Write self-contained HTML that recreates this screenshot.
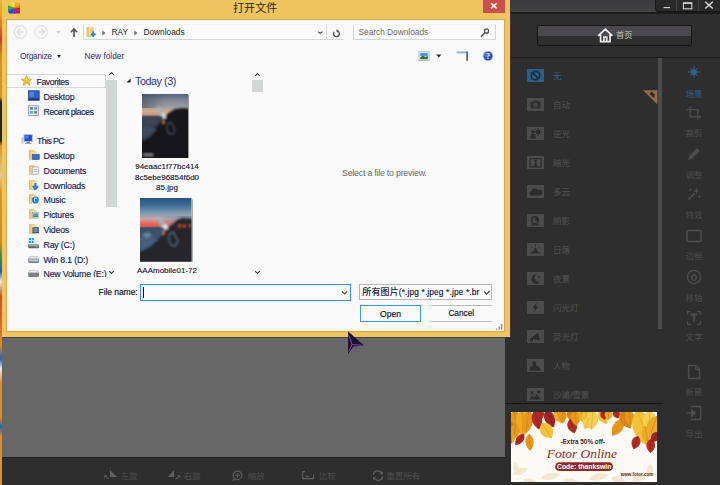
<!DOCTYPE html>
<html lang="zh">
<head>
<meta charset="utf-8">
<title>打开文件</title>
<style>
html,body{margin:0;padding:0;}
body{width:720px;height:485px;position:relative;overflow:hidden;background:#2e2e2e;
 font-family:"Liberation Sans","Noto Sans CJK SC",sans-serif;font-size:8.5px;color:#1b1b3a;}
.a{position:absolute;}
.t{position:absolute;white-space:nowrap;line-height:12px;height:12px;}
/* ---------- background app ---------- */
#canvas{left:2px;top:0;width:503px;height:457px;background:#676767;}
#strip{left:0;top:0;width:2px;height:485px;background:linear-gradient(#e6b436 0,#e8a428 3%,#c8402a 8%,#e0901e 12%,#e0901e 20%,#2a2420 21%,#2a2420 29%,#e0901e 30%,#e8c890 36%,#e0901e 40%,#d88a20 50%,#3a8a4a 53%,#2a60b0 56%,#e8e8e8 58%,#c8502a 61%,#d8702a 68%,#e0901e 71%,#2a60b0 74%,#e8e8e8 76%,#e0901e 79%,#e0901e 86%,#2a60b0 88%,#e0901e 90%,#e0901e 100%);}
#botbar{left:2px;top:457px;width:503px;height:28px;background:#2e2e2e;border-top:1px solid #1c1c1c;box-sizing:border-box;}
#rpanel{left:505px;top:0;width:215px;height:485px;background:#2e2e2e;}
#apptitle{left:505px;top:0;width:215px;height:14.2px;background:linear-gradient(#3b3a3c,#424144);border-bottom:2px solid #1c1c1c;box-sizing:border-box;}
#winctl{left:655px;top:0;width:65px;height:12px;background:#2a2a2a;border-left:1px solid #151515;border-bottom:1px solid #151515;border-bottom-left-radius:4px;box-sizing:border-box;}
#homebtn{left:537px;top:25px;width:155px;height:21px;box-sizing:border-box;border:1px solid #171717;border-radius:2px;background:linear-gradient(#4b494d 0,#4b494d 52%,#2f2f2f 52%,#2d2d2d 100%);}
.bt{color:#4d4d4d;font-size:8.5px;}
.sc{color:#545454;font-size:8.5px;}
.ric{color:#4d4d4d;font-size:8.5px;text-align:center;width:40px;}
.sico{position:absolute;left:527px;width:17px;height:13px;background:#484848;}
/* ---------- dialog ---------- */
#dlg{left:2px;top:0;width:508px;height:336.7px;background:#efc55f;box-shadow:0.8px 0.8px 0 0 #3e3c44;}
#dlgin{left:7px;top:19.5px;width:497px;height:311px;background:#fafafa;box-shadow:0 0 0 0.9px #cfa752;}
.nav{color:#151a58;-webkit-text-stroke:0.15px #151a58;font-size:8.8px;letter-spacing:-0.2px;}
.fn{color:#0c0c2c;-webkit-text-stroke:0.1px #0c0c2c;font-size:8px;text-align:center;width:70px;line-height:10.5px;height:auto;white-space:normal;}
</style>
</head>
<body>
<!-- background application -->
<div class="a" id="strip"></div>
<div class="a" id="canvas"></div>
<div class="a" id="botbar"></div>
<div class="a" id="rpanel"></div>
<div class="a" id="apptitle"></div>
<div class="a" id="winctl">
 <svg class="a" style="left:0;top:0" width="65" height="12" viewBox="0 0 65 12">
  <line x1="20.5" y1="0" x2="20.5" y2="11" stroke="#444" stroke-width="1"/>
  <line x1="42.5" y1="0" x2="42.5" y2="11" stroke="#444" stroke-width="1"/>
  <line x1="7.5" y1="7.6" x2="14" y2="7.6" stroke="#cfcfcf" stroke-width="1.2"/>
  <rect x="27.4" y="3.2" width="8.4" height="5.6" fill="none" stroke="#cfcfcf" stroke-width="1.1"/><line x1="27" y1="3" x2="36.2" y2="3" stroke="#cfcfcf" stroke-width="1.6"/>
  <path d="M49.2 1.8 L56.8 8.6 M56.8 1.8 L49.2 8.6" stroke="#dcdcdc" stroke-width="1.4" fill="none"/>
 </svg>
</div>
<div class="a" id="homebtn"></div>
<svg class="a" style="left:597px;top:28px" width="17" height="15" viewBox="0 0 17 15">
 <path d="M1.2 7.8 L8.3 1.2 L15.4 7.8 M3.6 6.6 V13.6 H13 V6.6 M6.9 13.6 V9 H9.7 V13.6" fill="none" stroke="#efefef" stroke-width="1.7" stroke-linejoin="miter"/>
</svg>
<div class="t" style="left:616px;top:30.2px;color:#c6c6c6;font-size:8.2px;">首页</div>
<div class="a" style="left:505px;top:57px;width:215px;height:1px;background:#191919;"></div>
<div class="a" style="left:658px;top:58px;width:4px;height:271px;background:#4c4c4e;"></div>
<div class="a" style="left:505px;top:403px;width:158px;height:1px;background:#161616;"></div>

<!-- ad banner -->
<svg class="a" style="left:510.6px;top:411.7px" width="146.6" height="70.8" viewBox="0 0 146.6 70.8">
 <rect width="146.6" height="70.8" fill="#fdfaf5"/>
 <path d="M0 0 C 4.00 -4.88 11.20 -4.03 16.00 0 C 11.20 4.03 4.00 4.88 0 0 Z" transform="translate(2.0 62.0) rotate(-20)" fill="#f3e2c6" opacity="0.8"/>
 <path d="M0 0 C 3.00 -3.90 8.40 -3.22 12.00 0 C 8.40 3.22 3.00 3.90 0 0 Z" transform="translate(4.0 50.0) rotate(80)" fill="#f3e2c6" opacity="0.8"/>
 <path d="M0 0 C 5.00 -4.88 14.00 -4.03 20.00 0 C 14.00 4.03 5.00 4.88 0 0 Z" transform="translate(30.0 66.0) rotate(-10)" fill="#f3e2c6" opacity="0.8"/>
 <path d="M0 0 C 4.00 -3.90 11.20 -3.22 16.00 0 C 11.20 3.22 4.00 3.90 0 0 Z" transform="translate(52.0 68.0) rotate(8)" fill="#f3e2c6" opacity="0.8"/>
 <path d="M0 0 C 5.00 -4.88 14.00 -4.03 20.00 0 C 14.00 4.03 5.00 4.88 0 0 Z" transform="translate(78.0 67.0) rotate(-12)" fill="#f3e2c6" opacity="0.8"/>
 <path d="M0 0 C 4.00 -4.88 11.20 -4.03 16.00 0 C 11.20 4.03 4.00 4.88 0 0 Z" transform="translate(100.0 66.0) rotate(15)" fill="#f3e2c6" opacity="0.8"/>
 <path d="M0 0 C 4.50 -4.88 12.60 -4.03 18.00 0 C 12.60 4.03 4.50 4.88 0 0 Z" transform="translate(120.0 68.0) rotate(-15)" fill="#f3e2c6" opacity="0.8"/>
 <path d="M0 0 C 3.50 -4.88 9.80 -4.03 14.00 0 C 9.80 4.03 3.50 4.88 0 0 Z" transform="translate(140.0 52.0) rotate(100)" fill="#f3e2c6" opacity="0.8"/>
 <path d="M0 0 C 3.50 -3.90 9.80 -3.22 14.00 0 C 9.80 3.22 3.50 3.90 0 0 Z" transform="translate(12.0 68.0) rotate(10)" fill="#f3e2c6" opacity="0.8"/>
 <path d="M0 0 C 5.00 -8.14 14.00 -6.73 20.00 0 C 14.00 6.73 5.00 8.14 0 0 Z" transform="translate(0.0 2.0) rotate(60)" fill="#efaa26"/><path d="M0 0 H18.4" transform="translate(0.0 2.0) rotate(60)" stroke="#c87410" stroke-width="0.5" fill="none"/>
 <path d="M0 0 C 6.00 -9.30 16.80 -7.69 24.00 0 C 16.80 7.69 6.00 9.30 0 0 Z" transform="translate(3.0 -2.0) rotate(82)" fill="#e8981a"/><path d="M0 0 H22.1" transform="translate(3.0 -2.0) rotate(82)" stroke="#c87410" stroke-width="0.5" fill="none"/>
 <path d="M0 0 C 6.75 -9.88 18.90 -8.17 27.00 0 C 18.90 8.17 6.75 9.88 0 0 Z" transform="translate(11.0 -2.0) rotate(88)" fill="#efaa26"/><path d="M0 0 H24.8" transform="translate(11.0 -2.0) rotate(88)" stroke="#c87410" stroke-width="0.5" fill="none"/>
 <path d="M0 0 C 6.00 -8.14 16.80 -6.73 24.00 0 C 16.80 6.73 6.00 8.14 0 0 Z" transform="translate(18.0 -2.0) rotate(98)" fill="#e8981a"/><path d="M0 0 H22.1" transform="translate(18.0 -2.0) rotate(98)" stroke="#c87410" stroke-width="0.5" fill="none"/>
 <path d="M0 0 C 3.50 -5.81 9.80 -4.80 14.00 0 C 9.80 4.80 3.50 5.81 0 0 Z" transform="translate(0.0 10.0) rotate(75)" fill="#dc8416"/><path d="M0 0 H12.9" transform="translate(0.0 10.0) rotate(75)" stroke="#c87410" stroke-width="0.5" fill="none"/>
 <path d="M0 0 C 4.00 -6.98 11.20 -5.77 16.00 0 C 11.20 5.77 4.00 6.98 0 0 Z" transform="translate(5.0 12.0) rotate(100)" fill="#e8981a"/><path d="M0 0 H14.7" transform="translate(5.0 12.0) rotate(100)" stroke="#c87410" stroke-width="0.5" fill="none"/>
 <path d="M0 0 C 3.50 -5.35 9.80 -4.42 14.00 0 C 9.80 4.42 3.50 5.35 0 0 Z" transform="translate(13.0 22.0) rotate(128)" fill="#b32c24"/><path d="M0 0 H12.9" transform="translate(13.0 22.0) rotate(128)" stroke="#7e1c18" stroke-width="0.5" fill="none"/>
 <path d="M0 0 C 4.25 -6.04 11.90 -5.00 17.00 0 C 11.90 5.00 4.25 6.04 0 0 Z" transform="translate(18.0 22.0) rotate(86)" fill="#e8981a"/><path d="M0 0 H15.6" transform="translate(18.0 22.0) rotate(86)" stroke="#c87410" stroke-width="0.5" fill="none"/>
 <path d="M0 0 C 2.50 -4.65 7.00 -3.84 10.00 0 C 7.00 3.84 2.50 4.65 0 0 Z" transform="translate(1.0 22.0) rotate(95)" fill="#efaa26"/><path d="M0 0 H9.2" transform="translate(1.0 22.0) rotate(95)" stroke="#c87410" stroke-width="0.5" fill="none"/>
 <path d="M0 0 C 5.00 -7.56 14.00 -6.25 20.00 0 C 14.00 6.25 5.00 7.56 0 0 Z" transform="translate(24.0 -2.0) rotate(78)" fill="#b32c24"/><path d="M0 0 H18.4" transform="translate(24.0 -2.0) rotate(78)" stroke="#7e1c18" stroke-width="0.5" fill="none"/>
 <path d="M0 0 C 4.75 -7.56 13.30 -6.25 19.00 0 C 13.30 6.25 4.75 7.56 0 0 Z" transform="translate(35.0 -2.0) rotate(66)" fill="#a02420"/><path d="M0 0 H17.5" transform="translate(35.0 -2.0) rotate(66)" stroke="#7e1c18" stroke-width="0.5" fill="none"/>
 <path d="M0 0 C 3.00 -5.81 8.40 -4.80 12.00 0 C 8.40 4.80 3.00 5.81 0 0 Z" transform="translate(30.0 -3.0) rotate(100)" fill="#b32c24"/><path d="M0 0 H11.0" transform="translate(30.0 -3.0) rotate(100)" stroke="#7e1c18" stroke-width="0.5" fill="none"/>
 <path d="M0 0 C 4.50 -9.30 12.60 -7.69 18.00 0 C 12.60 7.69 4.50 9.30 0 0 Z" transform="translate(31.0 11.0) rotate(58)" fill="#f3c238"/><path d="M0 0 H16.6" transform="translate(31.0 11.0) rotate(58)" stroke="#d8a020" stroke-width="0.5" fill="none"/>
 <path d="M0 0 C 4.00 -7.56 11.20 -6.25 16.00 0 C 11.20 6.25 4.00 7.56 0 0 Z" transform="translate(44.0 -2.0) rotate(55)" fill="#efaa26"/><path d="M0 0 H14.7" transform="translate(44.0 -2.0) rotate(55)" stroke="#c87410" stroke-width="0.5" fill="none"/>
 <path d="M0 0 C 3.25 -6.39 9.10 -5.29 13.00 0 C 9.10 5.29 3.25 6.39 0 0 Z" transform="translate(52.0 -2.0) rotate(95)" fill="#e8981a"/><path d="M0 0 H12.0" transform="translate(52.0 -2.0) rotate(95)" stroke="#c87410" stroke-width="0.5" fill="none"/>
 <path d="M0 0 C 3.00 -5.81 8.40 -4.80 12.00 0 C 8.40 4.80 3.00 5.81 0 0 Z" transform="translate(58.0 -2.0) rotate(70)" fill="#dc8416"/><path d="M0 0 H11.0" transform="translate(58.0 -2.0) rotate(70)" stroke="#c87410" stroke-width="0.5" fill="none"/>
 <path d="M0 0 C 3.75 -6.98 10.50 -5.77 15.00 0 C 10.50 5.77 3.75 6.98 0 0 Z" transform="translate(59.0 7.0) rotate(72)" fill="#b32c24"/><path d="M0 0 H13.8" transform="translate(59.0 7.0) rotate(72)" stroke="#7e1c18" stroke-width="0.5" fill="none"/>
 <path d="M0 0 C 4.00 -6.98 11.20 -5.77 16.00 0 C 11.20 5.77 4.00 6.98 0 0 Z" transform="translate(64.0 -2.0) rotate(85)" fill="#e8981a"/><path d="M0 0 H14.7" transform="translate(64.0 -2.0) rotate(85)" stroke="#c87410" stroke-width="0.5" fill="none"/>
 <path d="M0 0 C 3.50 -6.98 9.80 -5.77 14.00 0 C 9.80 5.77 3.50 6.98 0 0 Z" transform="translate(70.0 -2.0) rotate(70)" fill="#efaa26"/><path d="M0 0 H12.9" transform="translate(70.0 -2.0) rotate(70)" stroke="#c87410" stroke-width="0.5" fill="none"/>
 <path d="M0 0 C 4.75 -8.14 13.30 -6.73 19.00 0 C 13.30 6.73 4.75 8.14 0 0 Z" transform="translate(74.0 -2.0) rotate(75)" fill="#f3c238"/><path d="M0 0 H17.5" transform="translate(74.0 -2.0) rotate(75)" stroke="#d8a020" stroke-width="0.5" fill="none"/>
 <path d="M0 0 C 5.00 -8.72 14.00 -7.21 20.00 0 C 14.00 7.21 5.00 8.72 0 0 Z" transform="translate(82.0 -2.0) rotate(95)" fill="#f6d052"/><path d="M0 0 H18.4" transform="translate(82.0 -2.0) rotate(95)" stroke="#d8a020" stroke-width="0.5" fill="none"/>
 <path d="M0 0 C 4.00 -6.98 11.20 -5.77 16.00 0 C 11.20 5.77 4.00 6.98 0 0 Z" transform="translate(88.0 -2.0) rotate(60)" fill="#f3c238"/><path d="M0 0 H14.7" transform="translate(88.0 -2.0) rotate(60)" stroke="#d8a020" stroke-width="0.5" fill="none"/>
 <path d="M0 0 C 3.00 -5.81 8.40 -4.80 12.00 0 C 8.40 4.80 3.00 5.81 0 0 Z" transform="translate(78.0 6.0) rotate(110)" fill="#f6d052"/><path d="M0 0 H11.0" transform="translate(78.0 6.0) rotate(110)" stroke="#d8a020" stroke-width="0.5" fill="none"/>
 <path d="M0 0 C 2.50 -5.23 7.00 -4.32 10.00 0 C 7.00 4.32 2.50 5.23 0 0 Z" transform="translate(92.0 -2.0) rotate(80)" fill="#b32c24"/><path d="M0 0 H9.2" transform="translate(92.0 -2.0) rotate(80)" stroke="#7e1c18" stroke-width="0.5" fill="none"/>
 <path d="M0 0 C 2.25 -5.23 6.30 -4.32 9.00 0 C 6.30 4.32 2.25 5.23 0 0 Z" transform="translate(104.0 -2.0) rotate(70)" fill="#b32c24"/><path d="M0 0 H8.3" transform="translate(104.0 -2.0) rotate(70)" stroke="#7e1c18" stroke-width="0.5" fill="none"/>
 <path d="M0 0 C 2.50 -5.81 7.00 -4.80 10.00 0 C 7.00 4.80 2.50 5.81 0 0 Z" transform="translate(98.0 -2.0) rotate(95)" fill="#efaa26"/><path d="M0 0 H9.2" transform="translate(98.0 -2.0) rotate(95)" stroke="#c87410" stroke-width="0.5" fill="none"/>
 <path d="M0 0 C 5.00 -7.56 14.00 -6.25 20.00 0 C 14.00 6.25 5.00 7.56 0 0 Z" transform="translate(112.0 7.0) rotate(122)" fill="#e8981a"/><path d="M0 0 H18.4" transform="translate(112.0 7.0) rotate(122)" stroke="#c87410" stroke-width="0.5" fill="none"/>
 <path d="M0 0 C 5.00 -8.14 14.00 -6.73 20.00 0 C 14.00 6.73 5.00 8.14 0 0 Z" transform="translate(110.0 -1.0) rotate(62)" fill="#dc8416"/><path d="M0 0 H18.4" transform="translate(110.0 -1.0) rotate(62)" stroke="#c87410" stroke-width="0.5" fill="none"/>
 <path d="M0 0 C 4.00 -6.98 11.20 -5.77 16.00 0 C 11.20 5.77 4.00 6.98 0 0 Z" transform="translate(118.0 -2.0) rotate(85)" fill="#e8981a"/><path d="M0 0 H14.7" transform="translate(118.0 -2.0) rotate(85)" stroke="#c87410" stroke-width="0.5" fill="none"/>
 <path d="M0 0 C 6.00 -4.19 16.80 -3.46 24.00 0 C 16.80 3.46 6.00 4.19 0 0 Z" transform="translate(126.0 3.0) rotate(72)" fill="#b32c24"/><path d="M0 0 H22.1" transform="translate(126.0 3.0) rotate(72)" stroke="#7e1c18" stroke-width="0.5" fill="none"/>
 <path d="M0 0 C 10.00 -15.11 28.00 -12.49 40.00 0 C 28.00 12.49 10.00 15.11 0 0 Z" transform="translate(126.0 -2.0) rotate(70)" fill="#f3c238"/><path d="M0 0 H36.8" transform="translate(126.0 -2.0) rotate(70)" stroke="#d8a020" stroke-width="0.5" fill="none"/>
 <path d="M0 0 C 6.50 -10.46 18.20 -8.65 26.00 0 C 18.20 8.65 6.50 10.46 0 0 Z" transform="translate(138.0 -2.0) rotate(85)" fill="#f6d052"/><path d="M0 0 H23.9" transform="translate(138.0 -2.0) rotate(85)" stroke="#d8a020" stroke-width="0.5" fill="none"/>
 <path d="M0 0 C 5.50 -9.30 15.40 -7.69 22.00 0 C 15.40 7.69 5.50 9.30 0 0 Z" transform="translate(146.0 4.0) rotate(110)" fill="#efaa26"/><path d="M0 0 H20.2" transform="translate(146.0 4.0) rotate(110)" stroke="#c87410" stroke-width="0.5" fill="none"/>
 <path d="M0 0 C 5.00 -6.98 14.00 -5.77 20.00 0 C 14.00 5.77 5.00 6.98 0 0 Z" transform="translate(134.0 14.0) rotate(80)" fill="#efaa26"/><path d="M0 0 H18.4" transform="translate(134.0 14.0) rotate(80)" stroke="#c87410" stroke-width="0.5" fill="none"/>
 <path d="M0 0 C 3.50 -6.39 9.80 -5.29 14.00 0 C 9.80 5.29 3.50 6.39 0 0 Z" transform="translate(127.0 24.0) rotate(108)" fill="#b32c24"/><path d="M0 0 H12.9" transform="translate(127.0 24.0) rotate(108)" stroke="#7e1c18" stroke-width="0.5" fill="none"/>
 <path d="M0 0 C 3.50 -6.39 9.80 -5.29 14.00 0 C 9.80 5.29 3.50 6.39 0 0 Z" transform="translate(140.0 27.0) rotate(92)" fill="#b32c24"/><path d="M0 0 H12.9" transform="translate(140.0 27.0) rotate(92)" stroke="#7e1c18" stroke-width="0.5" fill="none"/>
 <path d="M0 0 C 3.00 -5.81 8.40 -4.80 12.00 0 C 8.40 4.80 3.00 5.81 0 0 Z" transform="translate(147.0 20.0) rotate(120)" fill="#a02420"/><path d="M0 0 H11.0" transform="translate(147.0 20.0) rotate(120)" stroke="#7e1c18" stroke-width="0.5" fill="none"/>
 <text x="71.8" y="32.3" text-anchor="middle" font-family="Liberation Sans,sans-serif" font-weight="bold" font-size="6.4" fill="#3b2a28">-Extra 50% off-</text>
 <text x="70.9" y="46.2" text-anchor="middle" font-family="Liberation Serif,serif" font-style="italic" font-size="13.4" fill="#8c2a22">Fotor Online</text>
 <rect x="44.2" y="50.3" width="57.8" height="8.7" rx="4.3" fill="#8f2a22"/>
 <text x="73.2" y="57.1" text-anchor="middle" font-family="Liberation Sans,sans-serif" font-weight="bold" font-size="6.8" fill="#fff">Code: thankswin</text>
 <text x="126" y="64.4" text-anchor="middle" font-family="Liberation Sans,sans-serif" font-weight="bold" font-size="4.6" fill="#5a2a24">www.fotor.com</text>
</svg>
<!-- /ad banner -->
<!-- DIALOG -->
<div class="a" id="dlg"></div>
<div class="a" id="dlgin"></div>

<!-- title bar -->
<svg class="a" style="left:7.9px;top:3px" width="12.2" height="10.8" viewBox="0 0 12.2 10.8">
 <defs><clipPath id="ic"><path d="M0.6 0 H11.6 Q12.2 0 12.2 0.6 V9 Q12.2 10.8 10.2 10.8 H2 Q0 10.8 0 9 V0.6 Q0 0 0.6 0 Z"/></clipPath></defs>
 <g clip-path="url(#ic)">
  <polygon points="6,4.7 0,0 0,2.4" fill="#c8d028"/>
  <polygon points="6,4.7 0,0 4.4,0" fill="#f0e020"/>
  <polygon points="6,4.7 4.4,0 7,0" fill="#f8ec70"/>
  <polygon points="6,4.7 7,0 12.2,0 12.2,2" fill="#f2a414"/>
  <polygon points="6,4.7 12.2,2 12.2,5" fill="#e8781c"/>
  <polygon points="6,4.7 12.2,5 12.2,8.4" fill="#d02444"/>
  <polygon points="6,4.7 12.2,8.4 12.2,10.8 8.6,10.8" fill="#b01480"/>
  <polygon points="6,4.7 8.6,10.8 5.4,10.8" fill="#7a1c9c"/>
  <polygon points="6,4.7 5.4,10.8 1.6,10.8 0,9" fill="#1c48c0"/>
  <polygon points="6,4.7 0,9 0,6" fill="#1888a0"/>
  <polygon points="6,4.7 0,6 0,2.4" fill="#30a840"/>
 </g>
</svg>
<div class="t" style="left:233px;top:1px;font-size:11px;line-height:14px;height:14px;color:#2a2418;letter-spacing:0.1px;">打开文件</div>
<div class="a" style="left:483px;top:0;width:22px;height:12.5px;background:#c9504b;"></div>
<svg class="a" style="left:490px;top:2px" width="8" height="8" viewBox="0 0 8 8"><path d="M1.2 1.2 L6.6 6.4 M6.6 1.2 L1.2 6.4" stroke="#fff" stroke-width="1.5" fill="none"/></svg>

<!-- nav buttons -->
<svg class="a" style="left:12px;top:24px" width="70" height="17" viewBox="0 0 70 17">
 <circle cx="8.5" cy="8" r="6.2" fill="none" stroke="#d6d9dc" stroke-width="1"/>
 <path d="M12 8 H5.2 M8 5 L5 8 L8 11" fill="none" stroke="#d6d9dc" stroke-width="1.1"/>
 <circle cx="29" cy="8" r="6.2" fill="none" stroke="#d6d9dc" stroke-width="1"/>
 <path d="M25.5 8 H32.3 M29.5 5 L32.5 8 L29.5 11" fill="none" stroke="#d6d9dc" stroke-width="1.1"/>
 <polygon points="44,7 49,7 46.5,9.6" fill="#d0d3d6"/>
 <path d="M62 13 V5.4 M59 8.2 L62 5 L65 8.2" fill="none" stroke="#5a5a5a" stroke-width="1.7"/>
</svg>
<!-- address bar -->
<div class="a" style="left:83px;top:24px;width:261px;height:15.5px;box-sizing:border-box;border:1px solid #d3d9d7;border-top-color:#f3f4f4;border-right-color:#f6f6f6;background:#fbfbfb;"></div>
<div class="a" style="left:326px;top:24px;width:1px;height:15px;background:#d5dbd9;"></div>
<svg class="a" style="left:86px;top:26px" width="12" height="12" viewBox="0 0 12 12">
 <path d="M0.5 1 H6.5 V11 H0.5 Z" fill="#e9c566"/>
 <path d="M3 0.6 H7.5 V10.5 H3 Z" fill="#f3dc92"/>
 <path d="M4.6 2.5 H8 V10.8 H4.6 Z" fill="#e8cf80"/>
 <path d="M7.2 5.2 V8.2 M5.2 7.6 L7.2 10 L9.4 7.6" fill="none" stroke="#2a7fd8" stroke-width="1.7"/>
</svg>
<svg class="a" style="left:102px;top:29.5px" width="4" height="6" viewBox="0 0 4 6"><polygon points="0.4,0.4 3.4,3 0.4,5.6" fill="#6a6a6a"/></svg>
<div class="t" style="left:111.5px;top:26px;font-size:8.3px;color:#1c1c1c;">RAY</div>
<svg class="a" style="left:133.5px;top:29.5px" width="4" height="6" viewBox="0 0 4 6"><polygon points="0.4,0.4 3.4,3 0.4,5.6" fill="#6a6a6a"/></svg>
<div class="t" style="left:143.5px;top:26px;font-size:8.3px;color:#1c1c1c;">Downloads</div>
<svg class="a" style="left:316px;top:29px" width="30" height="9" viewBox="0 0 30 9">
 <path d="M2.2 2.8 L4.2 4.4 L6.4 2.6" fill="none" stroke="#444" stroke-width="1.1"/>
 <path d="M22.2 2.4 A2.9 2.9 0 1 1 18.2 2.9" fill="none" stroke="#4d4d4d" stroke-width="1.3"/>
 <path d="M20.5 0.2 L23.4 2.3 L20.6 3.6 Z" fill="#4d4d4d"/>
</svg>
<!-- search box -->
<div class="a" style="left:353px;top:24px;width:143px;height:15.5px;box-sizing:border-box;border:1px solid #d3d9d7;border-top-color:#f3f4f4;background:#fbfbfb;"></div>
<div class="t" style="left:358.5px;top:26px;font-size:8.3px;color:#6a6a6a;">Search Downloads</div>
<svg class="a" style="left:480px;top:28px" width="10" height="10" viewBox="0 0 10 10">
 <rect x="4.6" y="1.2" width="3.8" height="3.8" rx="1" fill="none" stroke="#4c4c4c" stroke-width="1.3"/>
 <path d="M4.6 5.2 L1 8.6" stroke="#4c4c4c" stroke-width="1.5"/>
</svg>
<!-- toolbar -->
<div class="t" style="left:20px;top:49.5px;font-size:8.3px;color:#1e2f7a;letter-spacing:-0.25px;">Organize</div>
<div class="a" style="left:56.5px;top:54.5px;width:0;height:0;border-left:2.6px solid transparent;border-right:2.6px solid transparent;border-top:3px solid #2a2a4a;"></div>
<div class="t" style="left:84.5px;top:49.5px;font-size:8.3px;color:#1e2f7a;">New folder</div>
<svg class="a" style="left:418px;top:51px" width="80" height="11" viewBox="0 0 80 11">
 <rect x="1" y="0.8" width="10" height="8.6" fill="#f4f8fb" stroke="#9fb6cf" stroke-width="0.9"/>
 <rect x="2.2" y="2" width="7.6" height="3.2" fill="#4a9de0"/>
 <rect x="2.2" y="5.2" width="7.6" height="3" fill="#dfe7d6"/>
 <path d="M2.2 6.4 L5 4.6 L7 6 L9.8 5 V8.2 H2.2 Z" fill="#3d6b3a"/>
 <polygon points="18.2,3.6 23.4,3.6 20.8,6.4" fill="#1f2d44"/>
 <path d="M38.6 1.2 H49.4" fill="none" stroke="#86a0c4" stroke-width="1.3"/><path d="M49.2 0.6 V9.8" fill="none" stroke="#4a5f7a" stroke-width="1.7"/>
 <path d="M38.6 2.6 H48" fill="none" stroke="#c9d6e4" stroke-width="0.9"/>
 <circle cx="70" cy="5" r="4.8" fill="#2b52c4" stroke="#a6b6de" stroke-width="0.9"/>
 <circle cx="68.8" cy="3.8" r="2.6" fill="#5d86ea" opacity="0.7"/>
 <text x="70" y="8" font-size="7.5" font-weight="bold" fill="#fff" text-anchor="middle" font-family="Liberation Serif,serif">?</text>
</svg>
<!-- nav pane -->
<div class="a" style="left:7px;top:66px;width:112px;height:210.5px;overflow:hidden;">
<div class="a" style="left:-1px;top:8.3px;width:99.8px;height:14.2px;box-sizing:border-box;border:1px solid #d3dad8;"></div>
<svg class="a" style="left:14px;top:9px" width="12" height="11" viewBox="0 0 12 11"><polygon points="5.5,0.3 7.1,3.9 11,4.2 8,6.8 9,10.6 5.5,8.5 2,10.6 3,6.8 0,4.2 3.9,3.9" fill="#f5b73a" stroke="#e89a1e" stroke-width="0.5"/><polygon points="5.5,2 6.4,4.6 5.5,6.4 4.4,4.6" fill="#fde08a"/></svg>
<div class="t nav" style="left:29.5px;top:9.9px;letter-spacing:-0.45px;">Favorites</div>
<svg class="a" style="left:21px;top:23.8px" width="12" height="11" viewBox="0 0 12 11"><rect x="0.4" y="0.8" width="10.8" height="9.4" fill="#2f62c6" stroke="#1c3f93" stroke-width="0.8"/><rect x="1.4" y="1.8" width="4.5" height="5" fill="#5e8ee6" opacity="0.8"/><rect x="0.4" y="8.4" width="10.8" height="1.8" fill="#24366e"/></svg>
<div class="t nav" style="left:36.5px;top:24.7px;">Desktop</div>
<svg class="a" style="left:21px;top:38.6px" width="12" height="11" viewBox="0 0 12 11"><rect x="0.6" y="0.8" width="10" height="9.6" fill="#eef1f4" stroke="#8a939c" stroke-width="0.8"/><rect x="2" y="2.2" width="3" height="2.4" fill="#6a7a8a"/><rect x="6.2" y="2.2" width="3" height="2.4" fill="#4aa0de"/><rect x="2" y="6" width="3" height="2.6" fill="#58b0e8"/><rect x="6.2" y="6" width="3" height="2.6" fill="#6a7a8a"/></svg>
<div class="t nav" style="left:36.5px;top:39.5px;letter-spacing:-0.45px;">Recent places</div>
<svg class="a" style="left:14px;top:68.2px" width="12" height="11" viewBox="0 0 12 11"><rect x="3" y="0.6" width="8.4" height="6.8" fill="#2446c8" stroke="#b9c4d2" stroke-width="1"/><rect x="4.2" y="1.6" width="3.4" height="3" fill="#4f7df0"/><rect x="0.4" y="3" width="2.2" height="6.6" fill="#c5ccd4"/><rect x="5.4" y="7.6" width="3.6" height="1.4" fill="#7b8794"/><rect x="4" y="9" width="6.4" height="1" fill="#9aa5b0"/></svg>
<div class="t nav" style="left:30px;top:69.1px;letter-spacing:-0.6px;">This PC</div>
<svg class="a" style="left:21px;top:83px" width="12" height="11" viewBox="0 0 12 11"><path d="M1 1.2 H6 L7 2.4 H8.6 V11 H1 Z" fill="#e4bd5c"/><path d="M2.6 2.6 H9 V11 H2.6 Z" fill="#f6e3a0"/><path d="M1 11 L2.8 3.6 H4 V11 Z" fill="#eccb74"/><rect x="4.6" y="5.6" width="6.6" height="4.8" fill="#2f6fd8" stroke="#1d3f96" stroke-width="0.6"/></svg>
<div class="t nav" style="left:36.5px;top:83.9px;">Desktop</div>
<svg class="a" style="left:21px;top:97.8px" width="12" height="11" viewBox="0 0 12 11"><path d="M1 1.2 H6 L7 2.4 H8.6 V11 H1 Z" fill="#e4bd5c"/><path d="M2.6 2.6 H9 V11 H2.6 Z" fill="#f6e3a0"/><path d="M1 11 L2.8 3.6 H4 V11 Z" fill="#eccb74"/><rect x="4.4" y="3" width="6" height="7.6" fill="#f4f4f6" stroke="#a8a8b0" stroke-width="0.7"/><rect x="5.6" y="5" width="3.6" height="0.8" fill="#9ab"/><rect x="5.6" y="7" width="3.6" height="0.8" fill="#9ab"/></svg>
<div class="t nav" style="left:36.5px;top:98.7px;">Documents</div>
<svg class="a" style="left:21px;top:112.6px" width="12" height="11" viewBox="0 0 12 11"><path d="M1 1.2 H6 L7 2.4 H8.6 V11 H1 Z" fill="#e4bd5c"/><path d="M2.6 2.6 H9 V11 H2.6 Z" fill="#f6e3a0"/><path d="M1 11 L2.8 3.6 H4 V11 Z" fill="#eccb74"/><path d="M7.4 4 V8 M4.8 7 L7.4 10.4 L10 7" fill="none" stroke="#2478d8" stroke-width="2"/></svg>
<div class="t nav" style="left:36.5px;top:113.5px;">Downloads</div>
<svg class="a" style="left:21px;top:127.4px" width="12" height="11" viewBox="0 0 12 11"><path d="M1 1.2 H6 L7 2.4 H8.6 V11 H1 Z" fill="#e4bd5c"/><path d="M2.6 2.6 H9 V11 H2.6 Z" fill="#f6e3a0"/><path d="M1 11 L2.8 3.6 H4 V11 Z" fill="#eccb74"/><circle cx="7.4" cy="7" r="3.4" fill="#2a7be0"/><path d="M6.6 8.6 V4.8 L9 5.4" fill="none" stroke="#d6eaff" stroke-width="0.9"/></svg>
<div class="t nav" style="left:36.5px;top:128.3px;">Music</div>
<svg class="a" style="left:21px;top:142.2px" width="12" height="11" viewBox="0 0 12 11"><path d="M1 1.2 H6 L7 2.4 H8.6 V11 H1 Z" fill="#e4bd5c"/><path d="M2.6 2.6 H9 V11 H2.6 Z" fill="#f6e3a0"/><path d="M1 11 L2.8 3.6 H4 V11 Z" fill="#eccb74"/><rect x="4.4" y="4.4" width="6.4" height="5.6" fill="#e9f1f8" stroke="#8aa0b8" stroke-width="0.6"/><rect x="5.2" y="5.2" width="4.8" height="2" fill="#4a9de0"/><rect x="5.2" y="7.2" width="4.8" height="2" fill="#5c8a4c"/></svg>
<div class="t nav" style="left:36.5px;top:143.1px;">Pictures</div>
<svg class="a" style="left:21px;top:157px" width="12" height="11" viewBox="0 0 12 11"><path d="M1 1.2 H6 L7 2.4 H8.6 V11 H1 Z" fill="#e4bd5c"/><path d="M2.6 2.6 H9 V11 H2.6 Z" fill="#f6e3a0"/><path d="M1 11 L2.8 3.6 H4 V11 Z" fill="#eccb74"/><rect x="4.4" y="4.2" width="6.6" height="6" fill="#3a3f4a"/><rect x="5.8" y="5" width="3.8" height="4.4" fill="#6d90c4"/><path d="M5 4.6 V10 M10.4 4.6 V10" stroke="#d0d4da" stroke-width="0.7" stroke-dasharray="0.9 0.9"/></svg>
<div class="t nav" style="left:36.5px;top:157.9px;">Videos</div>
<svg class="a" style="left:21px;top:171.8px" width="12" height="11" viewBox="0 0 12 11"><rect x="0.8" y="0" width="2.2" height="2.2" fill="#18a8e8"/><rect x="3.6" y="0" width="2.2" height="2.2" fill="#18a8e8"/><rect x="0.8" y="2.8" width="2.2" height="2.2" fill="#18a8e8"/><rect x="3.6" y="2.8" width="2.2" height="2.2" fill="#18a8e8"/><rect x="0.2" y="6.2" width="10.8" height="4" rx="0.8" fill="#5b646e"/><rect x="0.8" y="6.6" width="9.6" height="1.6" fill="#aab2bc"/><rect x="8" y="8.6" width="1.8" height="0.8" fill="#6fe06a"/></svg>
<div class="t nav" style="left:36.5px;top:172.7px;">Ray (C:)</div>
<svg class="a" style="left:21px;top:186.6px" width="12" height="11" viewBox="0 0 12 11"><path d="M1.6 3.4 H9.8 L11 6 H0.4 Z" fill="#e4e7ea" stroke="#a0a6ac" stroke-width="0.5"/><rect x="0.2" y="5.8" width="10.8" height="4.2" rx="0.8" fill="#7a828c"/><rect x="0.8" y="6.4" width="9.6" height="1.8" fill="#c4cad0"/><rect x="8" y="8.4" width="1.8" height="0.8" fill="#6fe06a"/></svg>
<div class="t nav" style="left:36.5px;top:187.5px;">Win 8.1 (D:)</div>
<svg class="a" style="left:21px;top:201.4px" width="12" height="11" viewBox="0 0 12 11"><path d="M1.6 3.4 H9.8 L11 6 H0.4 Z" fill="#eceef0" stroke="#a0a6ac" stroke-width="0.5"/><rect x="0.2" y="5.8" width="10.8" height="4.2" rx="0.8" fill="#7a828c"/></svg>
<div class="t nav" style="left:36.5px;top:202.3px;">New Volume (E:)</div>
</div>
<div class="a" style="left:106px;top:80px;width:11px;height:127px;background:#d2d6d4;"></div>
<svg class="a" style="left:108px;top:71.2px" width="7" height="5" viewBox="0 0 7 5"><path d="M1.2 3.8 L3.5 1.6 L5.8 3.8" fill="none" stroke="#3a3a3a" stroke-width="1.1"/></svg>
<svg class="a" style="left:107.5px;top:269.5px" width="7" height="5" viewBox="0 0 7 5"><path d="M1.2 1.2 L3.5 3.4 L5.8 1.2" fill="none" stroke="#3a3a3a" stroke-width="1.1"/></svg>
<div class="a" style="left:252px;top:80px;width:11px;height:12px;background:#d2d6d4;"></div>
<svg class="a" style="left:254px;top:71.5px" width="7" height="5" viewBox="0 0 7 5"><path d="M1.2 3.8 L3.5 1.6 L5.8 3.8" fill="none" stroke="#3a3a3a" stroke-width="1.1"/></svg>
<svg class="a" style="left:253.5px;top:269.5px" width="7" height="5" viewBox="0 0 7 5"><path d="M1.2 1.2 L3.5 3.4 L5.8 1.2" fill="none" stroke="#3a3a3a" stroke-width="1.1"/></svg>
<!-- file list -->
<svg class="a" style="left:125.5px;top:77.5px" width="5" height="5" viewBox="0 0 5 5"><polygon points="4.6,0.4 4.6,4.6 0.4,4.6" fill="#2c2c2c"/></svg>
<div class="t" style="left:135px;top:73.6px;font-size:10.8px;line-height:14px;height:14px;color:#1e3290;letter-spacing:-0.45px;">Today (3)</div>
<svg class="a" style="left:142px;top:94px" width="47" height="64" viewBox="0 0 47 64">
 <defs>
  <filter id="bl" x="-20%" y="-20%" width="140%" height="140%"><feGaussianBlur stdDeviation="1.1"/></filter><clipPath id="c1"><rect x="0" y="0" width="46" height="64"/></clipPath><clipPath id="c2"><rect x="0" y="0" width="51.4" height="63.6"/></clipPath>
  <linearGradient id="sk1" x1="0" y1="0" x2="0" y2="1"><stop offset="0" stop-color="#56647a"/><stop offset="0.1" stop-color="#7e8896"/><stop offset="0.2" stop-color="#9a9ca4"/><stop offset="0.27" stop-color="#d6ab8c"/><stop offset="0.32" stop-color="#c99a78"/><stop offset="0.36" stop-color="#3a4658"/><stop offset="0.6" stop-color="#283240"/><stop offset="1" stop-color="#15161a"/></linearGradient>
  <linearGradient id="sk1b" x1="0" y1="0" x2="1" y2="0"><stop offset="0" stop-color="#3c4656" stop-opacity="0.55"/><stop offset="0.5" stop-color="#3c4656" stop-opacity="0"/></linearGradient>
 </defs>
 <rect x="46" y="1" width="1" height="63" fill="#9a9a9a"/>
 <rect x="0" y="0" width="46" height="64" fill="url(#sk1)"/>
 <rect x="0" y="0" width="46" height="14" fill="url(#sk1b)"/>
 <g clip-path="url(#c1)"><g filter="url(#bl)">
 <path d="M-6 47 L0 44 C6 41 12 36 17 30 L22 23 L28 18 L33 15 L40 14 L52 15 V72 H-6 Z" fill="#15161b"/>
 <path d="M0 33 C5 32 10 33 15 35 L9 42 L0 47 Z" fill="#445264" opacity="0.8"/>
 <path d="M0 26 H14 L16 30 L8 32 L0 31 Z" fill="#3a4656" opacity="0.9"/>
 <path d="M14.5 13 L16 11.6 L17.6 13 L21 15 L23 20 L21 23.5 L17.6 21.6 L16.4 17 Z" fill="#aab0ba" opacity="0.9"/>
 <path d="M20 20 L23 19 L24 24 L21 25 Z" fill="#e8e4dc"/>
 <path d="M25 30 L29 28 L33 36 L31 40 L27 40 L25 35 Z" fill="none" stroke="#6a7480" stroke-width="1" opacity="0.7"/>
 <path d="M20 26 L23 27 L21 31 Z" fill="#c58a4c"/>
 <rect x="1.5" y="60" width="9.5" height="1.7" fill="#a8acb0" opacity="0.85"/>
</g></g>
</svg>
<div class="t fn" style="left:132px;top:162.3px;">94eaac1f77bc414<br>8c5ebe96854f6d0<br>85.jpg</div>
<svg class="a" style="left:140px;top:198px" width="53" height="64" viewBox="0 0 53 64">
 <defs>
  <linearGradient id="sk2" x1="0" y1="0" x2="0" y2="1"><stop offset="0" stop-color="#24527e"/><stop offset="0.12" stop-color="#3f6e96"/><stop offset="0.25" stop-color="#86a0b4"/><stop offset="0.33" stop-color="#c9a4a4"/><stop offset="0.4" stop-color="#e4695a"/><stop offset="0.445" stop-color="#d65a50"/><stop offset="0.47" stop-color="#3a4e68"/><stop offset="0.75" stop-color="#3a5878"/><stop offset="1" stop-color="#2a2c32"/></linearGradient>
  <linearGradient id="sk2b" x1="0" y1="0" x2="1" y2="0"><stop offset="0.35" stop-color="#7590a8" stop-opacity="0"/><stop offset="1" stop-color="#6f8ca6" stop-opacity="0.9"/></linearGradient>
 </defs>
 <rect x="51.6" y="1.5" width="1.2" height="62.5" fill="#9c9c9c"/>
 <rect x="0" y="0" width="51.4" height="63.6" fill="url(#sk2)"/>
 <rect x="0" y="18" width="51.4" height="12" fill="url(#sk2b)"/>
 <g clip-path="url(#c2)"><g filter="url(#bl)">
 <path d="M-6 54 L0 52 C8 49 16 44 22 37 L27 30 L33 26 L37 22 L42 20 L58 21 V72 H-6 Z" fill="#25262c"/>
 <path d="M0 40 C6 38 12 39 18 41 L11 48 L0 54 Z" fill="#46607c" opacity="0.95"/>
 <path d="M2 36 L9 34 L12 38 L6 40 Z" fill="#7590aa" opacity="0.8"/>
 <circle cx="39.5" cy="28" r="1.4" fill="#e0522e"/><circle cx="44" cy="28" r="1.3" fill="#e0522e"/><circle cx="50" cy="27.8" r="1.2" fill="#d94a2a"/>
 <path d="M16.6 19 L18 17.8 L19.6 19 L23 21 L25 27 L23 30.4 L19.6 27.6 L18.4 23 Z" fill="#a8b2c0" opacity="0.9"/>
 <path d="M23 27 L27 25.6 L28 31 L24 32 Z" fill="#ece4d8"/>
 <path d="M22 33 L25 34 L23 38 Z" fill="#d8875a"/>
 <path d="M29 36 L33 34 L38 43 L35 48 L31 47 L29 42 Z" fill="none" stroke="#72829a" stroke-width="1.1" opacity="0.75"/>
</g></g>
</svg>
<div class="a" style="left:130px;top:264px;width:74px;height:10px;overflow:hidden;"><div class="t fn" style="left:2px;top:1.7px;">AAAmobile01-72</div></div>
<div class="t" style="left:342px;top:167.2px;font-size:8.9px;color:#6a6a6a;letter-spacing:-0.25px;">Select a file to preview.</div>
<div class="t" style="left:98.5px;top:285.8px;font-size:8.6px;color:#101028;-webkit-text-stroke:0.15px #101028;letter-spacing:-0.1px;">File name:</div>
<div class="a" style="left:140px;top:284.3px;width:211px;height:16.4px;box-sizing:border-box;border:1.2px solid #3c8fe6;background:#fcfcfc;"></div>
<div class="a" style="left:143.3px;top:287px;width:0.9px;height:11px;background:#111;"></div>
<svg class="a" style="left:341px;top:290px" width="8" height="6" viewBox="0 0 8 6"><path d="M1 1.4 L3.6 4 L6.2 1.4" fill="none" stroke="#444" stroke-width="1.2"/></svg>
<div class="a" style="left:359px;top:284.3px;width:133px;height:15.6px;box-sizing:border-box;border:1px solid #b4b8b8;background:#fbfbfb;"></div>
<div class="t" style="left:362.3px;top:286px;font-size:8.4px;color:#0c0c22;-webkit-text-stroke:0.12px #0c0c22;letter-spacing:0.12px;"><span style="font-size:9px">所有图片</span>(*.jpg *.jpeg *.jpe *.br</div>
<svg class="a" style="left:483px;top:289.5px" width="8" height="6" viewBox="0 0 8 6"><path d="M1 1.4 L3.6 4.2 L6.6 1" fill="none" stroke="#444" stroke-width="1.2"/></svg>
<div class="a" style="left:360.2px;top:305px;width:60.6px;height:17px;box-sizing:border-box;border:1.3px solid #3597f5;background:#fafafa;"></div>
<div class="t" style="left:360px;top:307.8px;width:61px;text-align:center;font-size:8.6px;color:#0c0c22;-webkit-text-stroke:0.15px #0c0c22;">Open</div>
<div class="a" style="left:431px;top:305.2px;width:60.6px;height:16.6px;box-sizing:border-box;border-top:1px solid #b9bcbc;border-bottom:1px solid #b9bcbc;background:#fafafa;"></div>
<div class="t" style="left:431px;top:307.4px;width:60.6px;text-align:center;font-size:8.3px;color:#0c0c22;-webkit-text-stroke:0.15px #0c0c22;">Cancel</div>
<svg class="a" style="left:495px;top:323px" width="8" height="8" viewBox="0 0 8 8"><path d="M6.6 1 V6.8 M4.2 3.4 V6.8 M1.6 5.4 V6.8" stroke="#85898d" stroke-width="1.3"/></svg>
<svg class="a" style="left:346px;top:329px" width="20" height="27" viewBox="0 0 20 27">
 <polygon points="2,2.2 2,25 7.4,17.6 18,16.6" fill="#1b1230"/>
 <path d="M2.8 6 L6 15.6 M6 15.6 L2.6 22.6 M6 15.6 L15.6 16.2" stroke="#8a3fc0" stroke-width="1" fill="none"/>
</svg>
<!-- scenes list -->
<svg class="a" style="left:527px;top:68.6px" width="17" height="13.4" viewBox="0 0 17 13.4"><rect width="17" height="13.4" fill="#2c5f8a"/><circle cx="8.5" cy="6.7" r="4.3" fill="none" stroke="#1e2a36" stroke-width="1.6"/><path d="M5.6 3.8 L11.4 9.6" stroke="#1e2a36" stroke-width="1.6"/></svg>
<div class="t sc" style="left:553px;top:69.5px;color:#2a6090;">无</div>
<svg class="a" style="left:527px;top:97.6px" width="17" height="13.4" viewBox="0 0 17 13.4"><rect width="17" height="13.4" fill="#4c4c4c"/><rect x="3.4" y="3.4" width="10.2" height="7" rx="1" fill="#303030"/><circle cx="8.5" cy="7" r="2.2" fill="#484848"/><rect x="6.4" y="2.2" width="4" height="1.6" fill="#303030"/></svg>
<div class="t sc" style="left:553px;top:98.5px;color:#545454;">自动</div>
<svg class="a" style="left:527px;top:126.6px" width="17" height="13.4" viewBox="0 0 17 13.4"><rect width="17" height="13.4" fill="#4c4c4c"/><circle cx="11" cy="5" r="2.3" fill="#2c2c2c"/><path d="M11 1 V9 M7 5 H15 M8.2 2.2 L13.8 7.8 M13.8 2.2 L8.2 7.8" stroke="#2c2c2c" stroke-width="0.9"/><path d="M3 11.5 L4 7.4 L6 6.6 L8 7.6 L9 11.5 Z" fill="#2c2c2c"/><circle cx="6" cy="4.8" r="1.7" fill="#2c2c2c"/></svg>
<div class="t sc" style="left:553px;top:127.5px;color:#545454;">逆光</div>
<svg class="a" style="left:527px;top:155.6px" width="17" height="13.4" viewBox="0 0 17 13.4"><rect width="17" height="13.4" fill="#4c4c4c"/><rect x="3" y="2.6" width="11" height="8.4" fill="none" stroke="#2c2c2c" stroke-width="1.2"/><path d="M7 10.4 L7.6 7 L8.5 6.4 L9.4 7 L10 10.4 Z" fill="#2c2c2c"/><circle cx="8.5" cy="5" r="1.4" fill="#2c2c2c"/></svg>
<div class="t sc" style="left:553px;top:156.5px;color:#545454;">暗光</div>
<svg class="a" style="left:527px;top:184.6px" width="17" height="13.4" viewBox="0 0 17 13.4"><rect width="17" height="13.4" fill="#4c4c4c"/><path d="M3.4 10.4 A2.4 2.4 0 0 1 4.6 6 A3.2 3.2 0 0 1 10.6 5 A2.8 2.8 0 0 1 13.8 10.4 Z" fill="#2c2c2c"/></svg>
<div class="t sc" style="left:553px;top:185.5px;color:#545454;">多云</div>
<svg class="a" style="left:527px;top:213.6px" width="17" height="13.4" viewBox="0 0 17 13.4"><rect width="17" height="13.4" fill="#4c4c4c"/><circle cx="8" cy="6.2" r="3.4" fill="none" stroke="#2c2c2c" stroke-width="1.4"/><path d="M4.4 10.8 H12" stroke="#2c2c2c" stroke-width="1.2"/><circle cx="10" cy="5.6" r="2" fill="#2c2c2c"/></svg>
<div class="t sc" style="left:553px;top:214.5px;color:#545454;">阴影</div>
<svg class="a" style="left:527px;top:242.6px" width="17" height="13.4" viewBox="0 0 17 13.4"><rect width="17" height="13.4" fill="#4c4c4c"/><path d="M2.6 10.6 L6 8.8 L8.5 4.4 L11 8.8 L14.4 10.6 Z" fill="#2c2c2c"/><path d="M8.5 1.6 V3.4 M4.6 4 L5.8 5.2 M12.4 4 L11.2 5.2" stroke="#2c2c2c" stroke-width="0.9"/></svg>
<div class="t sc" style="left:553px;top:243.5px;color:#545454;">日落</div>
<svg class="a" style="left:527px;top:271.6px" width="17" height="13.4" viewBox="0 0 17 13.4"><rect width="17" height="13.4" fill="#4c4c4c"/><path d="M9.6 2.4 A4.6 4.6 0 1 0 13 9.4 A3.9 3.9 0 0 1 9.6 2.4 Z" fill="#2c2c2c"/><path d="M12 3 L12.5 4.3 L13.8 4.6 L12.6 5.2 L12.4 6.4 L11.6 5.3 L10.4 5.2 L11.4 4.4 Z" fill="#2c2c2c"/></svg>
<div class="t sc" style="left:553px;top:272.5px;color:#545454;">夜景</div>
<svg class="a" style="left:527px;top:300.6px" width="17" height="13.4" viewBox="0 0 17 13.4"><rect width="17" height="13.4" fill="#4c4c4c"/><path d="M9.8 1.6 L5.6 7.2 H8.2 L6.8 11.8 L11.6 5.6 H8.8 Z" fill="#2c2c2c"/></svg>
<div class="t sc" style="left:553px;top:301.5px;color:#545454;">闪光灯</div>
<svg class="a" style="left:527px;top:329.6px" width="17" height="13.4" viewBox="0 0 17 13.4"><rect width="17" height="13.4" fill="#4c4c4c"/><path d="M3.6 8.6 L11 2.4 L13 10.6 Z" fill="#2c2c2c"/><rect x="3" y="8" width="3" height="3.4" fill="#2c2c2c"/></svg>
<div class="t sc" style="left:553px;top:330.5px;color:#545454;">荧光灯</div>
<svg class="a" style="left:527px;top:358.6px" width="17" height="13.4" viewBox="0 0 17 13.4"><rect width="17" height="13.4" fill="#4c4c4c"/><path d="M3 11.6 L3 7.8 L6 6.8 L5 3.8 L7 2 L9.4 3.2 L9 6.6 L12 8 L14 11.6 Z" fill="#2c2c2c"/></svg>
<div class="t sc" style="left:553px;top:359.5px;color:#545454;">人物</div>
<svg class="a" style="left:527px;top:387.6px" width="17" height="13.4" viewBox="0 0 17 13.4"><rect width="17" height="13.4" fill="#4c4c4c"/><path d="M2.6 11.4 L5 7.2 L7.4 9.4 L9.6 6 L14 11.4 Z" fill="#2c2c2c"/><circle cx="11.6" cy="4" r="1.7" fill="#2c2c2c"/><path d="M5 3 L5 6.6 M3.4 3.8 L6.6 5.8 M6.6 3.8 L3.4 5.8" stroke="#2c2c2c" stroke-width="0.8"/></svg>
<div class="t sc" style="left:553px;top:388.5px;color:#545454;">沙滩/雪景</div>
<svg class="a" style="left:643px;top:89.5px" width="15" height="15" viewBox="0 0 15 15"><polygon points="0,0.3 14.4,0.3 14.4,14.6" fill="#8f6c48"/><path d="M7.4 2.6 L9.8 2 L10.4 3.8 L12.4 4.4 L11 6 L11.8 8 L9.6 7.2 L8.4 5.6 L6.8 4.6 Z" fill="#3a2a1c"/></svg>
<!-- right toolbar -->
<svg class="a" style="left:686px;top:64.3px" width="16" height="16" viewBox="0 0 16 16"><circle cx="8" cy="8" r="3.1" fill="#2a6090"/><path d="M8 2.2 V13.8 M2.2 8 H13.8 M4 4 L12 12 M12 4 L4 12" stroke="#2a6090" stroke-width="1"/></svg>
<div class="t ric" style="left:674px;top:87.5px;color:#2a6090;">场景</div>
<svg class="a" style="left:686px;top:105.4px" width="16" height="16" viewBox="0 0 16 16"><path d="M4.2 1.6 V11.8 H15 M0.8 4.6 H11.8 V14.6" fill="none" stroke="#4d4d4d" stroke-width="1.4"/></svg>
<div class="t ric" style="left:674px;top:127.2px;color:#4d4d4d;">裁剪</div>
<svg class="a" style="left:686px;top:145.6px" width="16" height="16" viewBox="0 0 16 16"><path d="M2 14 L3.2 10 L11 2.2 L13.8 5 L6 12.8 Z" fill="#4d4d4d"/></svg>
<div class="t ric" style="left:674px;top:168.6px;color:#4d4d4d;">调整</div>
<svg class="a" style="left:686px;top:186px" width="16" height="16" viewBox="0 0 16 16"><path d="M2.4 13.6 L8.6 7.4" stroke="#4d4d4d" stroke-width="1.8"/><path d="M10.4 1.6 L11.2 4.2 L13.8 5 L11.2 5.8 L10.4 8.4 L9.6 5.8 L7 5 L9.6 4.2 Z" fill="#4d4d4d"/><path d="M4.4 2.4 V5.2 M3 3.8 H5.8 M13.4 9.4 V12 M12 10.6 H14.8" stroke="#4d4d4d" stroke-width="0.9"/></svg>
<div class="t ric" style="left:674px;top:208.95px;color:#4d4d4d;">特效</div>
<svg class="a" style="left:686px;top:227.8px" width="16" height="16" viewBox="0 0 16 16"><rect x="1" y="2.6" width="14" height="10.8" rx="1.2" fill="none" stroke="#4d4d4d" stroke-width="1.5"/></svg>
<div class="t ric" style="left:674px;top:250.2px;color:#4d4d4d;">边框</div>
<svg class="a" style="left:686px;top:268.6px" width="16" height="16" viewBox="0 0 16 16"><circle cx="8" cy="8" r="6.6" fill="none" stroke="#4d4d4d" stroke-width="1.4"/><path d="M4.6 8.6 L8 5.2 L11.4 8.6 M6.2 8 V11.2 H9.8 V8" fill="none" stroke="#4d4d4d" stroke-width="1.3"/></svg>
<div class="t ric" style="left:674px;top:291.6px;color:#4d4d4d;">移轴</div>
<svg class="a" style="left:686px;top:309.5px" width="16" height="16" viewBox="0 0 16 16"><path d="M1.6 4.6 V1.6 H4.6 M11.4 1.6 H14.4 V4.6 M14.4 11.4 V14.4 H11.4 M4.6 14.4 H1.6 V11.4" fill="none" stroke="#4d4d4d" stroke-width="1.2"/><path d="M4.6 4.6 H11.4 M8 4.6 V11.6" stroke="#4d4d4d" stroke-width="2" fill="none"/></svg>
<div class="t ric" style="left:674px;top:331.2px;color:#4d4d4d;">文字</div>
<svg class="a" style="left:686px;top:364px" width="16" height="16" viewBox="0 0 16 16"><path d="M2.6 1.4 H9.8 L13.6 5.2 V14.6 H2.6 Z" fill="none" stroke="#4d4d4d" stroke-width="1.5"/><path d="M9.6 1.6 V5.4 H13.4" fill="none" stroke="#4d4d4d" stroke-width="1.1"/></svg>
<div class="t ric" style="left:674px;top:386.2px;color:#4d4d4d;">新建</div>
<svg class="a" style="left:686px;top:405px" width="16" height="16" viewBox="0 0 16 16"><path d="M4.4 1.4 H14.6 V14.6 H4.4" fill="none" stroke="#4d4d4d" stroke-width="1.5"/><path d="M1 8 H5" stroke="#4d4d4d" stroke-width="1.4"/><path d="M5 3.6 L10.4 8 L5 12.4 Z" fill="#4d4d4d"/></svg>
<div class="t ric" style="left:674px;top:427.6px;color:#4d4d4d;">导出</div>
<!-- bottom bar -->
<svg class="a" style="left:104px;top:469px" width="14" height="12" viewBox="0 0 14 12"><path d="M6 1 L13 8 H6 Z" fill="#606060"/><path d="M4.6 9.6 A5 5 0 0 1 1 6.4 M1 6.4 L0.4 8.6 M1 6.4 L3 7" fill="none" stroke="#606060" stroke-width="1"/></svg>
<div class="t bt" style="left:120.8px;top:469.7px;">左旋</div>
<svg class="a" style="left:167px;top:469px" width="14" height="12" viewBox="0 0 14 12"><path d="M7 1 L1 8 H7 Z" fill="#606060"/><path d="M8.6 9.8 A5 5 0 0 0 12.6 6.4 M12.6 6.4 L13.2 8.6 M12.6 6.4 L10.6 7" fill="none" stroke="#606060" stroke-width="1"/></svg>
<div class="t bt" style="left:183.8px;top:469.7px;">右旋</div>
<svg class="a" style="left:231.5px;top:470px" width="12" height="12" viewBox="0 0 12 12"><circle cx="5.6" cy="5.4" r="4.3" fill="none" stroke="#606060" stroke-width="1.2"/><path d="M5.6 3 V7.8 M3.2 5.4 H8" stroke="#606060" stroke-width="1"/><path d="M2.4 8.8 L0.8 10.8" stroke="#606060" stroke-width="1.4"/></svg>
<div class="t bt" style="left:247.8px;top:469.7px;">缩放</div>
<svg class="a" style="left:301.5px;top:470.5px" width="13" height="9" viewBox="0 0 13 9"><path d="M0.6 0.6 V7.6 H11.6 V3.4 M0.6 0.6 H3" fill="none" stroke="#606060" stroke-width="1.1"/><path d="M3.4 5.4 H7.4" stroke="#606060" stroke-width="1.1"/></svg>
<div class="t bt" style="left:318.8px;top:469.7px;">比较</div>
<svg class="a" style="left:371.5px;top:470px" width="12" height="12" viewBox="0 0 12 12"><path d="M1.2 4.6 A4.6 4.6 0 0 1 9.8 3.4 M10.6 6.6 A4.6 4.6 0 0 1 2 8" fill="none" stroke="#606060" stroke-width="1.3"/><path d="M10.8 1 V4.2 H7.8 Z M1 10.4 V7.2 H4 Z" fill="#606060"/></svg>
<div class="t bt" style="left:386.2px;top:469.7px;">重置所有</div>
</body>
</html>
